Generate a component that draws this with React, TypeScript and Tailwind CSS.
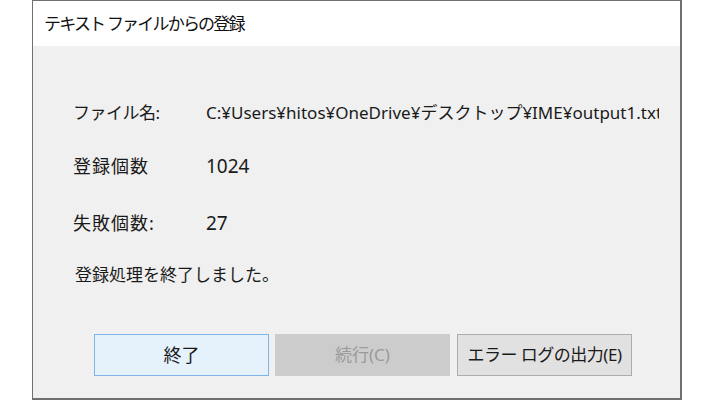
const font = { fontFamily: '"Noto Sans", "Noto Sans CJK JP", sans-serif' };

export default function App() {
  return (
    <div className="w-[715px] h-[400px] bg-white overflow-hidden" style={font}>
      <div className="ml-[32px] w-[650px] h-[400px] flex flex-col border-l border-t border-r-2 border-b-2 border-[#707070] bg-[#f0f0f0]">
        <div className="h-[45px] shrink-0 bg-white flex items-center pl-[11px] text-[17px] tracking-[-1.8px] text-[#111]">
          テキスト ファイルからの登録
        </div>

        <div className="flex flex-col pl-[40px] text-[17px] text-[#1a1a1a]">
          <div className="flex items-center h-[24px] mt-[55px]">
            <div className="w-[133px] shrink-0 tracking-[-0.5px]">ファイル名:</div>
            <div className="w-[453px] overflow-hidden whitespace-nowrap">
              C:¥Users¥hitos¥OneDrive¥デスクトップ¥IME¥output1.txt
            </div>
          </div>
          <div className="flex items-center h-[24px] mt-[29px]">
            <div className="w-[133px] shrink-0 text-[18px] tracking-[1px]">登録個数</div>
            <div className="text-[19px]">1024</div>
          </div>
          <div className="flex items-center h-[24px] mt-[33px]">
            <div className="w-[133px] shrink-0 text-[18px] tracking-[1px]">失敗個数:</div>
            <div className="text-[19px]">27</div>
          </div>
          <div className="flex items-center h-[24px] mt-[28px] pl-[2px]">
            登録処理を終了しました。
          </div>
        </div>

        <div className="flex pl-[61px] mt-[47px] gap-[6px] text-[17px]">
          <button className="w-[175px] h-[42px] border border-[#7eb4ea] bg-[#e5f1fb] text-[#1a1a1a] text-[18px]">
            終了
          </button>
          <button className="w-[175px] h-[42px] border border-[#cccccc] bg-[#cccccc] text-[#9a9a9a]">
            続行(C)
          </button>
          <button className="w-[175px] h-[42px] ml-[1px] border border-[#adadad] bg-[#e1e1e1] text-[#1a1a1a] tracking-[-0.5px]">
            エラー ログの出力(E)
          </button>
        </div>
      </div>
    </div>
  );
}
